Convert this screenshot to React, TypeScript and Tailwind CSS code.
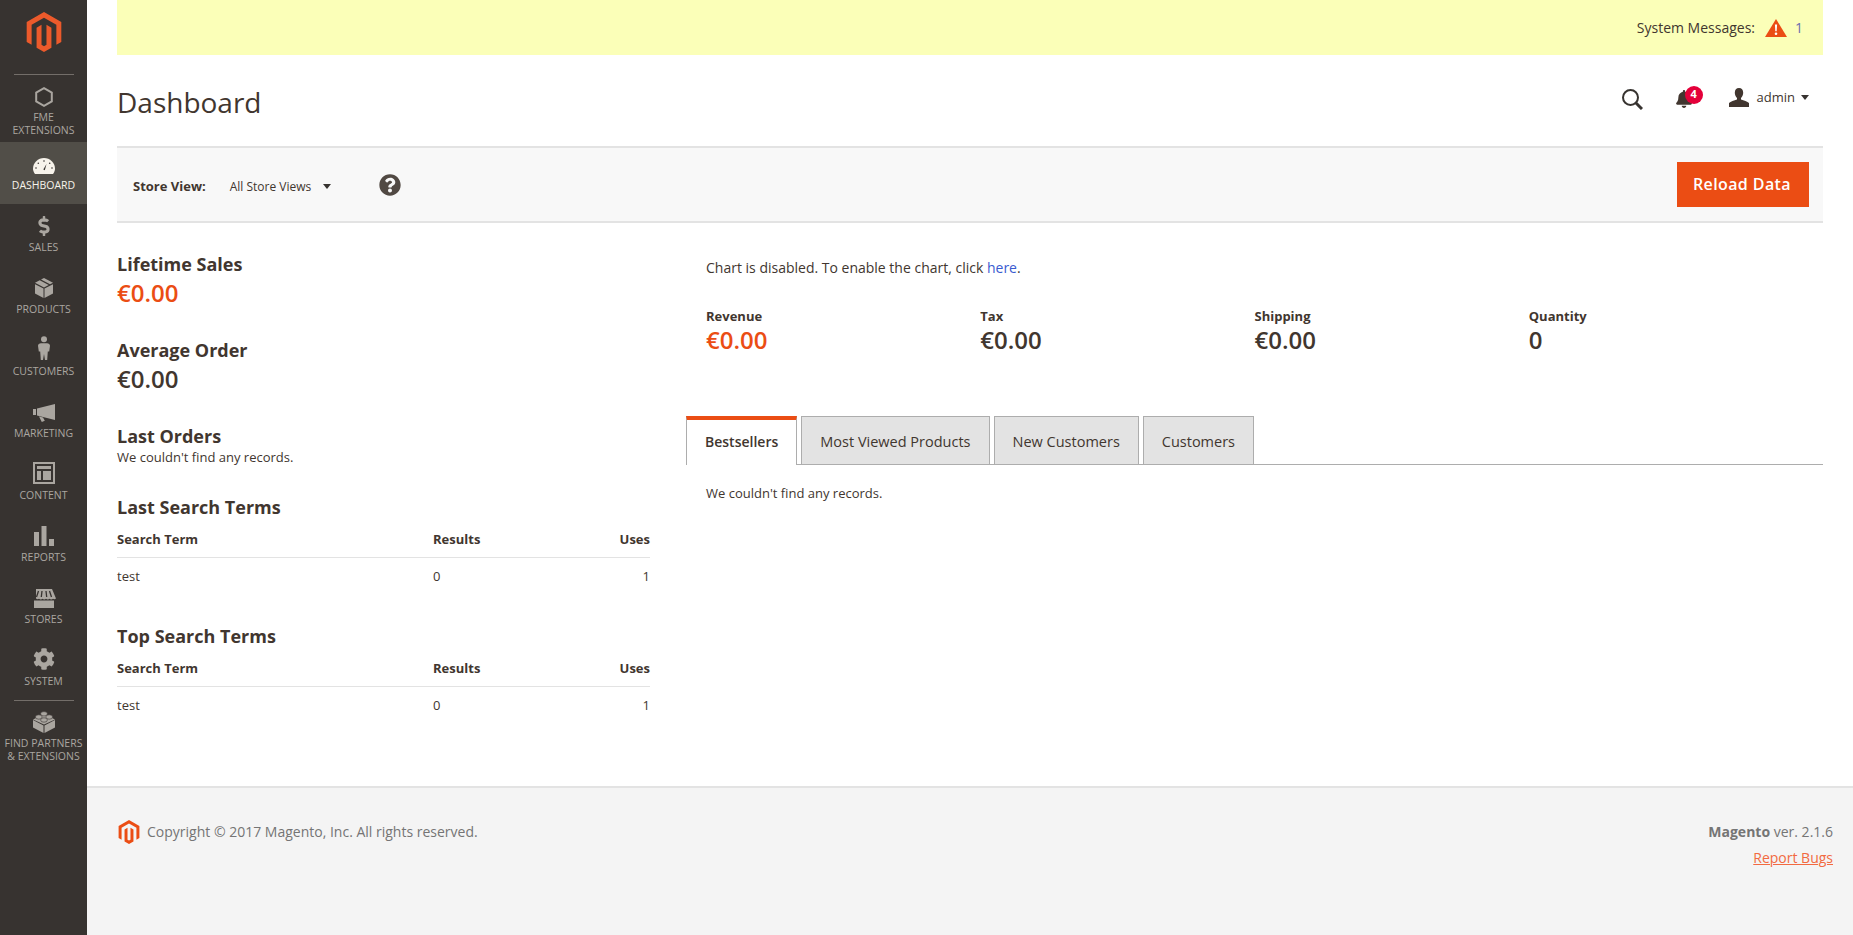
import type { ReactNode } from 'react';
import { FaBell, FaCog, FaDollarSign, FaQuestionCircle } from 'react-icons/fa';
import { SiMagento } from 'react-icons/si';

const Caret = () => (
  <svg viewBox="0 0 8 5" className="h-[5px] w-2 fill-[#373330]">
    <path d="M0 0h8L4 5z" />
  </svg>
);

const HexIcon = () => (
  <svg viewBox="0 0 18 20" className="h-5 w-[18px] fill-none stroke-current stroke-2">
    <path d="M9 1.200l7.800 4.400v8.800L9 18.800l-7.800-4.400V5.600z" />
  </svg>
);

const GaugeIcon = () => (
  <svg viewBox="0 0 22 16" className="h-4 w-[22px]">
    <path d="M2 16C.7 14.300 0 12.500 0 10.800 0 4.800 5 0 11 0s11 4.800 11 10.800c0 1.700-.7 3.500-2 5.200z" fill="currentColor" />
    <path d="M13.500 6l-3.200 5.500 1.500.8z" fill="#373330" />
    <g fill="#373330">
      <circle cx="3" cy="10" r=".8" />
      <circle cx="5.300" cy="5.300" r=".8" />
      <circle cx="11" cy="3" r=".8" />
      <circle cx="16.700" cy="5.300" r=".8" />
      <circle cx="19" cy="10" r=".8" />
    </g>
  </svg>
);

const BoxIcon = () => (
  <svg viewBox="0 0 18 20" className="h-5 w-[18px] fill-current">
    <path d="M0 6.200l8.500 4.400V20L0 15.500zM18 6.200l-8.500 4.400V20l8.500-4.500z" />
    <path d="M9 0l9 4.700-3 1.600-9-4.800zM4.700 2.200l9 4.800L9 9.500 0 4.700z" />
  </svg>
);

const PersonIcon = () => (
  <svg viewBox="0 0 12 24" className="h-6 w-3 fill-current">
    <circle cx="6" cy="3.200" r="3" />
    <path d="M3 7.200h6c1.700 0 3 1 3 2.600l-.8 5.700H9.800L9.200 24H7l-1-6-1 6H2.800l-.6-8.500H.8L0 9.800c0-1.600 1.300-2.600 3-2.600z" />
  </svg>
);

const MegaphoneIcon = () => (
  <svg viewBox="0 0 22 18" className="h-[18px] w-[22px] fill-current">
    <path d="M0 5h3v6H0zM4 4.500L22 0v16l-18-4.500zM6 12.500l4 1 1.800 3.300-3 1.200z" />
  </svg>
);

const ContentIcon = () => (
  <svg viewBox="0 0 22 22" className="h-[22px] w-[22px] fill-current">
    <path fillRule="evenodd" d="M0 0h22v22H0zM2 2v18h18V2z" />
    <path d="M4 4h14v3H4zM4 9h4v9H4zM10 9h8v9h-8z" />
  </svg>
);

const BarsIcon = () => (
  <svg viewBox="0 0 20 20" className="h-5 w-5 fill-current">
    <path d="M0 6h5v14H0zM7.500 0h5v20h-5zM15 13h5v7h-5z" />
  </svg>
);

const StoreIcon = () => (
  <svg viewBox="0 0 24 19" className="h-[19px] w-6 fill-current">
    <path d="M4 0h16l4 9.500c-1 1-2.200 1-3 .3-1 .8-2.500.8-3.500 0-1 .8-2.500.8-3.500 0-1 .8-2.500.8-3.500 0-1 .8-2.500.8-3.500 0-.8.7-2 .7-3-.3z" />
    <path d="M2 11.500h20V19H2z" />
    <path d="M6.500 2L4.500 8M10 2L9.300 8M14 2l.7 6M17.500 2l2 6" stroke="#373330" strokeWidth="1.300" />
  </svg>
);

const BrickIcon = () => (
  <svg viewBox="0 0 22 22" className="h-[22px] w-[22px] fill-current">
    <path d="M0 9l10.500 5.500V22L0 16.500zM22 9l-10.500 5.500V22L22 16.500z" />
    <path d="M11 3l11 5.500L11 13.500 0 8.500z" />
    <ellipse cx="11" cy="2.800" rx="3.400" ry="2.200" stroke="#373330" strokeWidth=".6" />
    <ellipse cx="5.800" cy="6" rx="3.400" ry="2.200" stroke="#373330" strokeWidth=".6" />
    <ellipse cx="16.200" cy="6" rx="3.400" ry="2.200" stroke="#373330" strokeWidth=".6" />
    <ellipse cx="11" cy="9" rx="3.400" ry="2.200" stroke="#373330" strokeWidth=".6" />
  </svg>
);

const WarningIcon = () => (
  <svg viewBox="0 0 22 18" className="h-[18px] w-[22px]">
    <path d="M11 0l11 18H0z" fill="#eb4d14" />
    <path d="M9.900 5.500h2.200l-.4 6.800h-1.400z" fill="#fff" />
    <circle cx="11" cy="14.700" r="1.300" fill="#fff" />
  </svg>
);

const SearchIcon = () => (
  <svg viewBox="0 0 22 22" className="h-[22px] w-[22px] fill-none stroke-[#373330]">
    <circle cx="9.500" cy="9.500" r="7.500" strokeWidth="2" />
    <path d="M15 15l6 6" strokeWidth="3" />
  </svg>
);

const UserIcon = () => (
  <svg viewBox="0 0 20 19" className="h-[19px] w-5 fill-[#41362f]">
    <path d="M10 0c2.700 0 4.200 2 4.200 4.700 0 2.200-1 4.200-2.200 5.300v1.400c2.700 1 6.500 2 8 3.600V19H0v-4c1.500-1.600 5.300-2.600 8-3.600V10C6.800 8.900 5.800 6.900 5.800 4.700 5.800 2 7.300 0 10 0z" />
  </svg>
);

type NavItem = { label: string; icon: ReactNode; active?: boolean };

const navItems: NavItem[] = [
  { label: 'Dashboard', icon: <GaugeIcon />, active: true },
  { label: 'Sales', icon: <FaDollarSign className="h-5 w-5" /> },
  { label: 'Products', icon: <BoxIcon /> },
  { label: 'Customers', icon: <PersonIcon /> },
  { label: 'Marketing', icon: <MegaphoneIcon /> },
  { label: 'Content', icon: <ContentIcon /> },
  { label: 'Reports', icon: <BarsIcon /> },
  { label: 'Stores', icon: <StoreIcon /> },
  { label: 'System', icon: <FaCog className="h-[22px] w-[22px]" /> },
];

function Sidebar() {
  return (
    <aside className="flex w-[87px] shrink-0 flex-col bg-[#373330] text-[#aaa6a0]">
      <div className="flex flex-col items-center pt-3">
        <SiMagento className="h-10 w-10 text-[#ec5a2b]" />
        <div className="mt-[22px] h-px w-[60px] bg-[#736e69]" />
      </div>
      <div className="flex h-[67px] flex-col items-center">
        <div className="flex h-8 items-end">
          <HexIcon />
        </div>
        <div className="mt-1 text-center text-[10.5px] uppercase leading-[13px]">
          FME
          <br />
          Extensions
        </div>
      </div>
      {navItems.map((item) => (
        <div
          key={item.label}
          className={`flex flex-col items-center pb-3 ${item.active ? 'bg-[#514e48] text-[#f7f3eb]' : ''}`}
        >
          <div className="flex h-8 items-end">{item.icon}</div>
          <div className="mt-1 text-[10.5px] uppercase leading-3.5">{item.label}</div>
        </div>
      ))}
      <div className="mx-auto h-px w-[60px] bg-[#736e69]" />
      <div className="flex flex-col items-center">
        <div className="flex h-8 items-end">
          <BrickIcon />
        </div>
        <div className="mt-1 whitespace-nowrap text-center text-[10.5px] uppercase leading-[13px]">
          Find Partners
          <br />
          &amp; Extensions
        </div>
      </div>
    </aside>
  );
}

function SearchTable({ title }: { title: string }) {
  return (
    <section>
      <h3 className="text-lg font-bold leading-7">{title}</h3>
      <table className="w-full table-fixed text-[13px] leading-4">
        <thead>
          <tr className="border-b border-[#e3e3e3]">
            <th className="w-[316px] py-2.5 text-left font-bold">Search Term</th>
            <th className="py-2.5 text-left font-bold">Results</th>
            <th className="py-2.5 text-right font-bold">Uses</th>
          </tr>
        </thead>
        <tbody>
          <tr>
            <td className="py-2.5">test</td>
            <td className="py-2.5">0</td>
            <td className="py-2.5 text-right">1</td>
          </tr>
        </tbody>
      </table>
    </section>
  );
}

const totals = [
  { label: 'Revenue', value: '€0.00', accent: true },
  { label: 'Tax', value: '€0.00' },
  { label: 'Shipping', value: '€0.00' },
  { label: 'Quantity', value: '0' },
];

const tabs = ['Bestsellers', 'Most Viewed Products', 'New Customers', 'Customers'];

export default function App() {
  return (
    <div className="flex min-h-screen font-['Open_Sans',sans-serif] text-[#41362f]">
      <Sidebar />
      <div className="flex min-w-0 flex-1 flex-col">
        <div className="flex-1 px-7.5">
          <div className="flex h-[55px] items-center justify-end bg-[#fbffb8] pr-5 text-sm">
            <span>System Messages:</span>
            <span className="ml-2.5">
              <WarningIcon />
            </span>
            <span className="ml-2 text-[#6b6bb0]">1</span>
          </div>

          <header className="flex h-[91px] items-center justify-between">
            <h1 className="pt-0.5 text-[28px] font-normal">Dashboard</h1>
            <div className="mb-1 flex items-center pr-3.5">
              <SearchIcon />
              <div className="relative ml-8">
                <FaBell className="h-[18px] w-[18px] text-[#41362f]" />
                <span className="absolute -right-2.5 -top-1 flex h-[18px] w-[18px] items-center justify-center rounded-full bg-[#e4003a] text-[11px] font-bold text-white">
                  4
                </span>
              </div>
              <div className="mb-0.5 ml-9">
                <UserIcon />
              </div>
              <span className="mb-0.5 ml-2 text-[13px]">admin</span>
              <span className="mb-0.5 ml-1.5">
                <Caret />
              </span>
            </div>
          </header>

          <div className="flex items-center justify-between border-y-2 border-[#e3e3e3] bg-[#f8f8f8] py-3.5 pl-4 pr-3.5">
            <div className="flex items-center">
              <span className="pt-1 text-[13px] font-bold">Store View:</span>
              <span className="ml-6 pt-1 text-xs">All Store Views</span>
              <span className="ml-3 pt-1">
                <Caret />
              </span>
              <FaQuestionCircle className="ml-12 h-[22px] w-[22px] text-[#514943]" />
            </div>
            <button className="h-[45px] bg-[#eb4d14] pb-0.5 pl-4 pr-4.5 text-base font-semibold tracking-wide text-white">
              Reload Data
            </button>
          </div>

          <div className="flex gap-9">
            <div className="w-[533px] shrink-0 pt-7">
              <h3 className="text-lg font-bold leading-6.5">Lifetime Sales</h3>
              <div className="mb-7.5 mt-0.5 text-2xl font-semibold leading-7 text-[#eb4d14]">€0.00</div>
              <h3 className="text-lg font-bold leading-6.5">Average Order</h3>
              <div className="mb-7.5 mt-0.5 text-2xl font-semibold leading-7">€0.00</div>
              <h3 className="text-lg font-bold leading-6.5">Last Orders</h3>
              <p className="mb-7 text-[13px] leading-4">We couldn't find any records.</p>
              <div className="flex flex-col gap-7">
                <SearchTable title="Last Search Terms" />
                <SearchTable title="Top Search Terms" />
              </div>
            </div>

            <div className="min-w-0 flex-1 pt-8.25">
              <p className="px-5 text-sm leading-6">
                Chart is disabled. To enable the chart, click <a className="text-[#3a5bd0]">here</a>.
              </p>
              <div className="mt-7 grid grid-cols-4 px-5">
                {totals.map((t) => (
                  <div key={t.label} className="w-[232px]">
                    <div className="text-[13px] font-bold leading-4">{t.label}</div>
                    <div className={`text-2xl font-semibold leading-8 ${t.accent ? 'text-[#eb4d14]' : ''}`}>
                      {t.value}
                    </div>
                  </div>
                ))}
              </div>

              <div className="mt-15 flex gap-1 border-b border-[#adadad]">
                {tabs.map((tab, i) => (
                  <div
                    key={tab}
                    className={
                      i === 0
                        ? '-mb-px h-[49px] border-x border-[#adadad] border-t-4 border-t-[#eb4d14] bg-white px-[18px] pt-3 text-sm font-semibold'
                        : 'h-12 border border-b-0 border-[#adadad] bg-[#e3e3e3] px-[18px] pt-3.5 text-[14.5px]'
                    }
                  >
                    {tab}
                  </div>
                ))}
              </div>
              <p className="mt-4.5 px-5 text-[13px] leading-5">We couldn't find any records.</p>
            </div>
          </div>
        </div>

        <footer className="mt-8 flex h-[149px] justify-between border-t-2 border-[#e3e3e3] bg-[#f4f4f4] pl-7.5 pr-5 pt-8.5 text-sm text-[#757575]">
          <div className="flex items-start gap-1.5">
            <SiMagento className="-mt-0.5 h-6 w-6 text-[#eb4d14]" />
            <span>Copyright © 2017 Magento, Inc. All rights reserved.</span>
          </div>
          <div className="text-right">
            <div>
              <span className="font-bold">Magento</span> ver. 2.1.6
            </div>
            <a className="mt-1.5 block text-[#f26a41] underline">Report Bugs</a>
          </div>
        </footer>
      </div>
    </div>
  );
}
